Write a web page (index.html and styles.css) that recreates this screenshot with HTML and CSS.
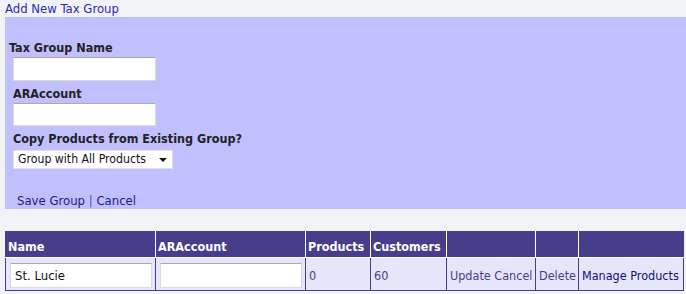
FILE: index.html
```html
<!DOCTYPE html>
<html lang="en">
<head>
    <meta charset="UTF-8">
    <title>Tax Groups</title>
    <link rel="stylesheet" href="styles.css">
</head>
<body>
    <a href="#" class="add-link">Add New Tax Group</a>
    <div class="panel">
        <label class="label first">Tax Group Name</label>
        <input type="text" class="field">
        <label class="label">ARAccount</label>
        <input type="text" class="field">
        <label class="label">Copy Products from Existing Group?</label>
        <div class="select">Group with All Products <span class="arrow"></span></div>
        <div class="actions">
            <a href="#">Save Group</a> <span class="sep">|</span> <a href="#">Cancel</a>
        </div>
    </div>
    <table class="groups">
        <colgroup>
            <col class="c-name">
            <col class="c-ar">
            <col class="c-prod">
            <col class="c-cust">
            <col class="c-upd">
            <col class="c-del">
            <col class="c-man">
        </colgroup>
        <tr>
            <th>Name</th>
            <th>ARAccount</th>
            <th>Products</th>
            <th>Customers</th>
            <th></th>
            <th></th>
            <th></th>
        </tr>
        <tr>
            <td><input type="text" class="cell-input" value="St. Lucie"></td>
            <td><input type="text" class="cell-input"></td>
            <td class="num">0</td>
            <td class="num">60</td>
            <td><a href="#" class="soft">Update</a> <a href="#" class="soft">Cancel</a></td>
            <td><a href="#" class="soft">Delete</a></td>
            <td><a href="#" class="strong">Manage Products</a></td>
        </tr>
    </table>
</body>
</html>
```

FILE: styles.css
```css
body {
    margin: 0;
    padding: 0 0 0 5px;
    background-color: #f2f3f7;
    font-family: "DejaVu Sans Condensed", "DejaVu Sans", sans-serif;
    font-size: 13px;
    color: #1c1c80;
}
a {
    text-decoration: none;
}
.add-link {
    display: block;
    height: 17px;
    line-height: 17px;
    color: #2a2ab4;
}
.panel {
    background-color: #c0c0ff;
    padding: 22px 0 0 0;
    height: 170px;
    display: flex;
    flex-direction: column;
    align-items: flex-start;
}
.label {
    font-weight: bold;
    font-size: 12.5px;
    color: #222;
    padding-left: 8px;
    line-height: 17px;
}
.label.first {
    padding-left: 4px;
}
.field {
    box-sizing: border-box;
    margin: 1px 0 4px 8px;
    width: 143px;
    height: 25px;
    border: 1px solid #dcdcdc;
    border-top-color: #aaa;
    background: #fff;
}
.select {
    box-sizing: border-box;
    margin: 3px 0 0 8px;
    width: 160px;
    height: 19px;
    line-height: 17px;
    padding-left: 4px;
    font-size: 12.2px;
    background: #fff;
    border: 1px solid #e0e0e0;
    color: #111;
    position: relative;
}
.arrow {
    position: absolute;
    right: 5px;
    top: 7px;
    border-left: 4px solid transparent;
    border-right: 4px solid transparent;
    border-top: 4px solid #111;
}
.actions {
    margin: 23px 0 0 12px;
    line-height: 17px;
    font-size: 13px;
}
.actions a {
    color: #1c1c80;
}
.sep {
    color: #4a4ad0;
}
.groups {
    margin-top: 22px;
    width: 679px;
    table-layout: fixed;
    border-collapse: collapse;
    border: 1px solid #483d8b;
    font-size: 12.5px;
}
.c-name { width: 150px; }
.c-ar { width: 150px; }
.c-prod { width: 65px; }
.c-cust { width: 76px; }
.c-upd { width: 89px; }
.c-del { width: 43px; }
.c-man { width: 105px; }
.groups th {
    background-color: #483d8b;
    color: #fff;
    text-align: left;
    height: 22px;
    padding: 3px 2px 0 2px;
    border-left: 1px solid #fff;
    border-right: 1px solid #fff;
    border-bottom: 1px solid #fff;
    white-space: nowrap;
}
.groups th:first-child {
    border-left-color: #483d8b;
}
.groups th:last-child {
    border-right-color: #483d8b;
}
.groups td {
    background-color: #e6e6fa;
    border: 1px solid #483d8b;
    height: 30px;
    padding: 2px 3px 0 3px;
    white-space: nowrap;
    overflow: hidden;
}
.cell-input {
    box-sizing: border-box;
    width: 142px;
    height: 25px;
    border: 1px solid #dcdcdc;
    border-top-color: #aaa;
    font-family: "DejaVu Sans Condensed", "DejaVu Sans", sans-serif;
    font-size: 13px;
    color: #111;
    padding: 0 4px;
    margin-left: 1px;
    vertical-align: middle;
}
.num {
    color: #483d8b;
}
.soft {
    color: #483d8b;
}
.strong {
    color: #10107a;
}
```
